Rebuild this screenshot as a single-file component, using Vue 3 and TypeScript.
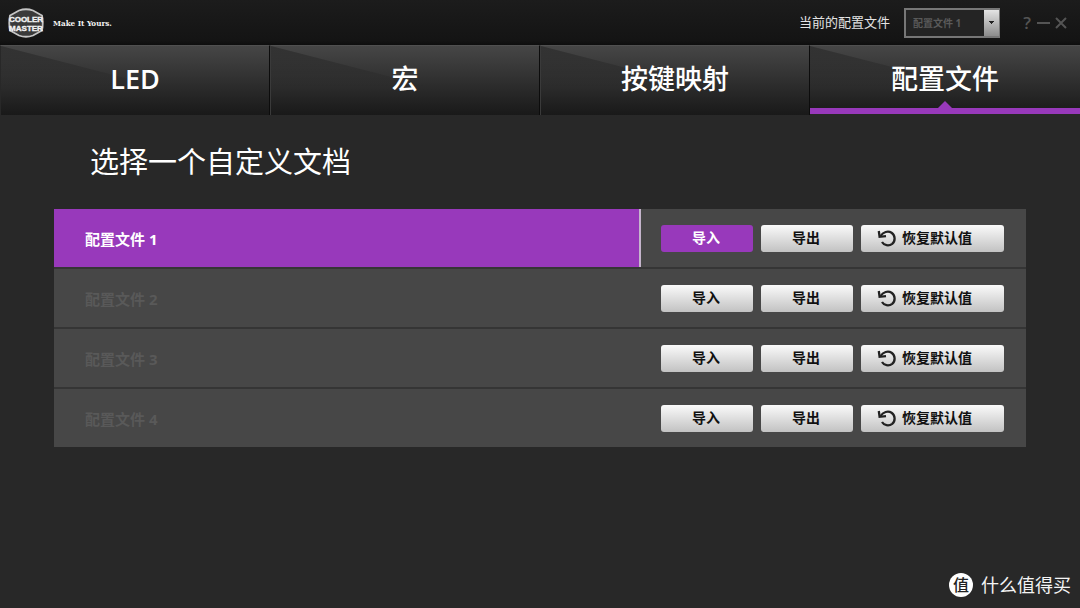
<script setup lang="ts">
import { ref } from 'vue'

const tabs: string[] = ['LED', '宏', '按键映射', '配置文件']
const profiles: string[] = ['配置文件 1', '配置文件 2', '配置文件 3', '配置文件 4']

const activeTab = ref(3)
const activeProfile = ref(0)
</script>

<template>
  <div class="app">
    <header class="topbar">
      <svg class="logo" viewBox="0 0 36 30" role="img" aria-label="Cooler Master">
        <path d="M2 7.5 L11 2.5 Q18 0 25 2.5 L34 7.5 Q35.5 15 34 22.5 L25 27.5 Q18 30 11 27.5 L2 22.5 Q0.5 15 2 7.5Z" fill="#3a3a3a" stroke="#c4c4c4" stroke-width="1.8" />
        <text x="18" y="13.8" text-anchor="middle" class="logo-text">COOLER</text>
        <text x="18" y="22.6" text-anchor="middle" class="logo-text">MASTER</text>
      </svg>
      <span class="slogan">Make It Yours.</span>
      <label class="current-label" for="current">当前的配置文件</label>
      <select id="current" v-model="activeProfile" class="current">
        <option v-for="(name, i) in profiles" :key="name" :value="i">{{ name }}</option>
      </select>
      <div class="window-controls">
        <button type="button" class="win help" aria-label="帮助">?</button>
        <button type="button" class="win" aria-label="最小化">
          <svg viewBox="0 0 14 14"><path d="M0 7 H13" /></svg>
        </button>
        <button type="button" class="win" aria-label="关闭">
          <svg viewBox="0 0 14 14"><path d="M2 2 L12 12 M12 2 L2 12" /></svg>
        </button>
      </div>
    </header>

    <nav class="tabs">
      <button
        v-for="(tab, i) in tabs"
        :key="tab"
        type="button"
        class="tab"
        :class="{ active: i === activeTab }"
        @click="activeTab = i"
      >
        <span class="tab-text" :class="{ latin: tab === 'LED' }">{{ tab }}</span>
      </button>
    </nav>

    <main class="content">
      <h1 class="title">选择一个自定义文档</h1>
      <ul class="list">
        <li v-for="(name, i) in profiles" :key="name" class="row" :class="{ selected: i === activeProfile }">
          <button type="button" class="name" @click="activeProfile = i">{{ name }}</button>
          <div class="actions">
            <button type="button" class="btn" :class="{ primary: i === activeProfile }">导入</button>
            <button type="button" class="btn">导出</button>
            <button type="button" class="btn wide">
              <svg class="reset" viewBox="0 0 20 18">
                <path d="M3.6 7 C6 3 11 1.4 14.6 3.8 C18.4 6.4 18.6 12 15.2 14.8 C11.8 17.4 7 16.4 5 13" />
                <path d="M1.8 2 L2.6 7.8 L9 7.2" />
              </svg>
              <span>恢复默认值</span>
            </button>
          </div>
        </li>
      </ul>
    </main>

    <footer class="watermark">
      <span class="mark">值</span>
      <span>什么值得买</span>
    </footer>
  </div>
</template>

<style>
body {
  background: #282828;
}
</style>

<style scoped>
.app {
  box-sizing: border-box;
  display: flex;
  flex-direction: column;
  min-height: 100vh;
  background: #282828;
  color: #fff;
  font-family: "Open Sans", "Noto Sans CJK SC", sans-serif;
}

button {
  margin: 0;
  padding: 0;
  border: 0;
  background: none;
  color: inherit;
  font: inherit;
  cursor: pointer;
}

.topbar {
  display: flex;
  align-items: center;
  height: 45px;
  padding: 0 12px 0 8px;
  background: linear-gradient(#1c1c1c, #141414 90%, #0e0e0e);
}

.logo {
  width: 36px;
  height: 30px;
}

.logo-text {
  fill: #f2f2f2;
  stroke: #f2f2f2;
  stroke-width: 0.4;
  font-family: "Liberation Sans", sans-serif;
  font-size: 8px;
  font-weight: 700;
}

.slogan {
  margin-left: 9px;
  color: #f4f4f4;
  font-family: "DejaVu Serif Condensed", "DejaVu Serif", serif;
  font-size: 8px;
  font-weight: 700;
}

.current-label {
  margin-left: auto;
  padding-bottom: 2px;
  color: #e4e4e4;
  font-size: 13px;
}

.current {
  appearance: none;
  width: 96px;
  height: 30px;
  margin-left: 14px;
  padding: 0 18px 0 7px;
  border: 2px solid #777;
  border-right-width: 1px;
  border-radius: 0;
  background:
    conic-gradient(from -45deg at 50% 100%, #222 90deg, transparent 0) right 5px center / 6px 3px no-repeat,
    linear-gradient(#e4e4e4, #8c8c8c) right center / 15px 100% no-repeat,
    #242424;
  color: #5a5a5a;
  font-family: "Open Sans", "Noto Sans CJK SC", sans-serif;
  font-size: 10px;
  font-weight: 700;
}

.window-controls {
  display: flex;
  align-items: center;
  gap: 3px;
  margin-left: 20px;
  color: #545454;
}

.win {
  display: flex;
  align-items: center;
  justify-content: center;
  width: 14px;
  height: 20px;
}

.win svg {
  width: 14px;
  height: 14px;
  fill: none;
  stroke: currentColor;
  stroke-width: 2;
}

.help {
  font-size: 17px;
  font-weight: 600;
  line-height: 20px;
}

.tabs {
  display: grid;
  grid-template-columns: repeat(4, 1fr);
}

.tab {
  position: relative;
  box-sizing: border-box;
  height: 70px;
  padding-bottom: 4px;
  border-top: 1px solid #505050;
  border-right: 1px solid #0c0c0c;
  border-left: 1px solid #3a3a3a;
  background: linear-gradient(#464646, #191919);
  font-size: 27px;
  font-weight: 500;
  line-height: 64px;
}

.tab::before {
  content: "";
  position: absolute;
  inset: 0;
  background: linear-gradient(rgba(0, 0, 0, 0.28), transparent 60%);
  clip-path: polygon(0 0, 100% 100%, 0 100%);
}

.tab-text {
  position: relative;
}

.latin {
  font-weight: 600;
}

.tab:first-child {
  border-left-color: #282828;
}

.tab.active {
  border-right: 0;
  border-left: 0;
  background:
    linear-gradient(#282828, #282828) bottom / 100% 1px no-repeat,
    linear-gradient(#9839bb, #9839bb) bottom / 100% 7px no-repeat,
    linear-gradient(#464646, #191919);
}

.tab.active::after {
  content: "";
  position: absolute;
  bottom: 7px;
  left: 50%;
  margin-left: -7px;
  border: 7px solid transparent;
  border-top-width: 0;
  border-bottom-color: #9839bb;
}

.content {
  flex: 1;
  padding: 0 5%;
}

.title {
  margin: 25px 0 26px 36px;
  font-size: 29px;
  font-weight: 400;
  line-height: 43px;
}

.list {
  display: flex;
  flex-direction: column;
  gap: 2px;
  margin: 0;
  padding: 0;
  background: #353535;
  list-style: none;
}

.row {
  display: flex;
  height: 58px;
  background: #474747;
}

.name {
  flex: 1;
  padding: 0 31px;
  border-right: 2px solid transparent;
  color: #595959;
  font-size: 15px;
  font-weight: 700;
  text-align: left;
}

.selected .name {
  border-right-color: #c5b5cc;
  background: #9839bb;
  color: #fff;
}

.actions {
  display: flex;
  align-items: center;
  gap: 8px;
  padding: 0 22px 0 20px;
}

.btn {
  display: flex;
  align-items: center;
  justify-content: center;
  box-sizing: border-box;
  width: 92px;
  height: 27px;
  padding: 0 2px 1px 0;
  border-radius: 3px;
  background: linear-gradient(#fafafa, #c2c2c2);
  color: #111;
  font-size: 14px;
  font-weight: 700;
  line-height: 20px;
}

.btn.primary {
  background: #9839bb;
  color: #fff;
}

.btn.wide {
  justify-content: flex-start;
  gap: 5px;
  width: 143px;
  padding-left: 16px;
}

.reset {
  width: 20px;
  height: 18px;
  fill: none;
  stroke: #222;
  stroke-width: 2.3;
}

.watermark {
  display: flex;
  align-items: center;
  justify-content: flex-end;
  gap: 8px;
  padding: 0 9px 11px 0;
  color: #f4f4f4;
  font-size: 18px;
  line-height: 24px;
}

.mark {
  width: 24px;
  height: 24px;
  border-radius: 50%;
  background: #fff;
  color: #222;
  font-size: 16px;
  font-weight: 500;
  text-align: center;
}
</style>
